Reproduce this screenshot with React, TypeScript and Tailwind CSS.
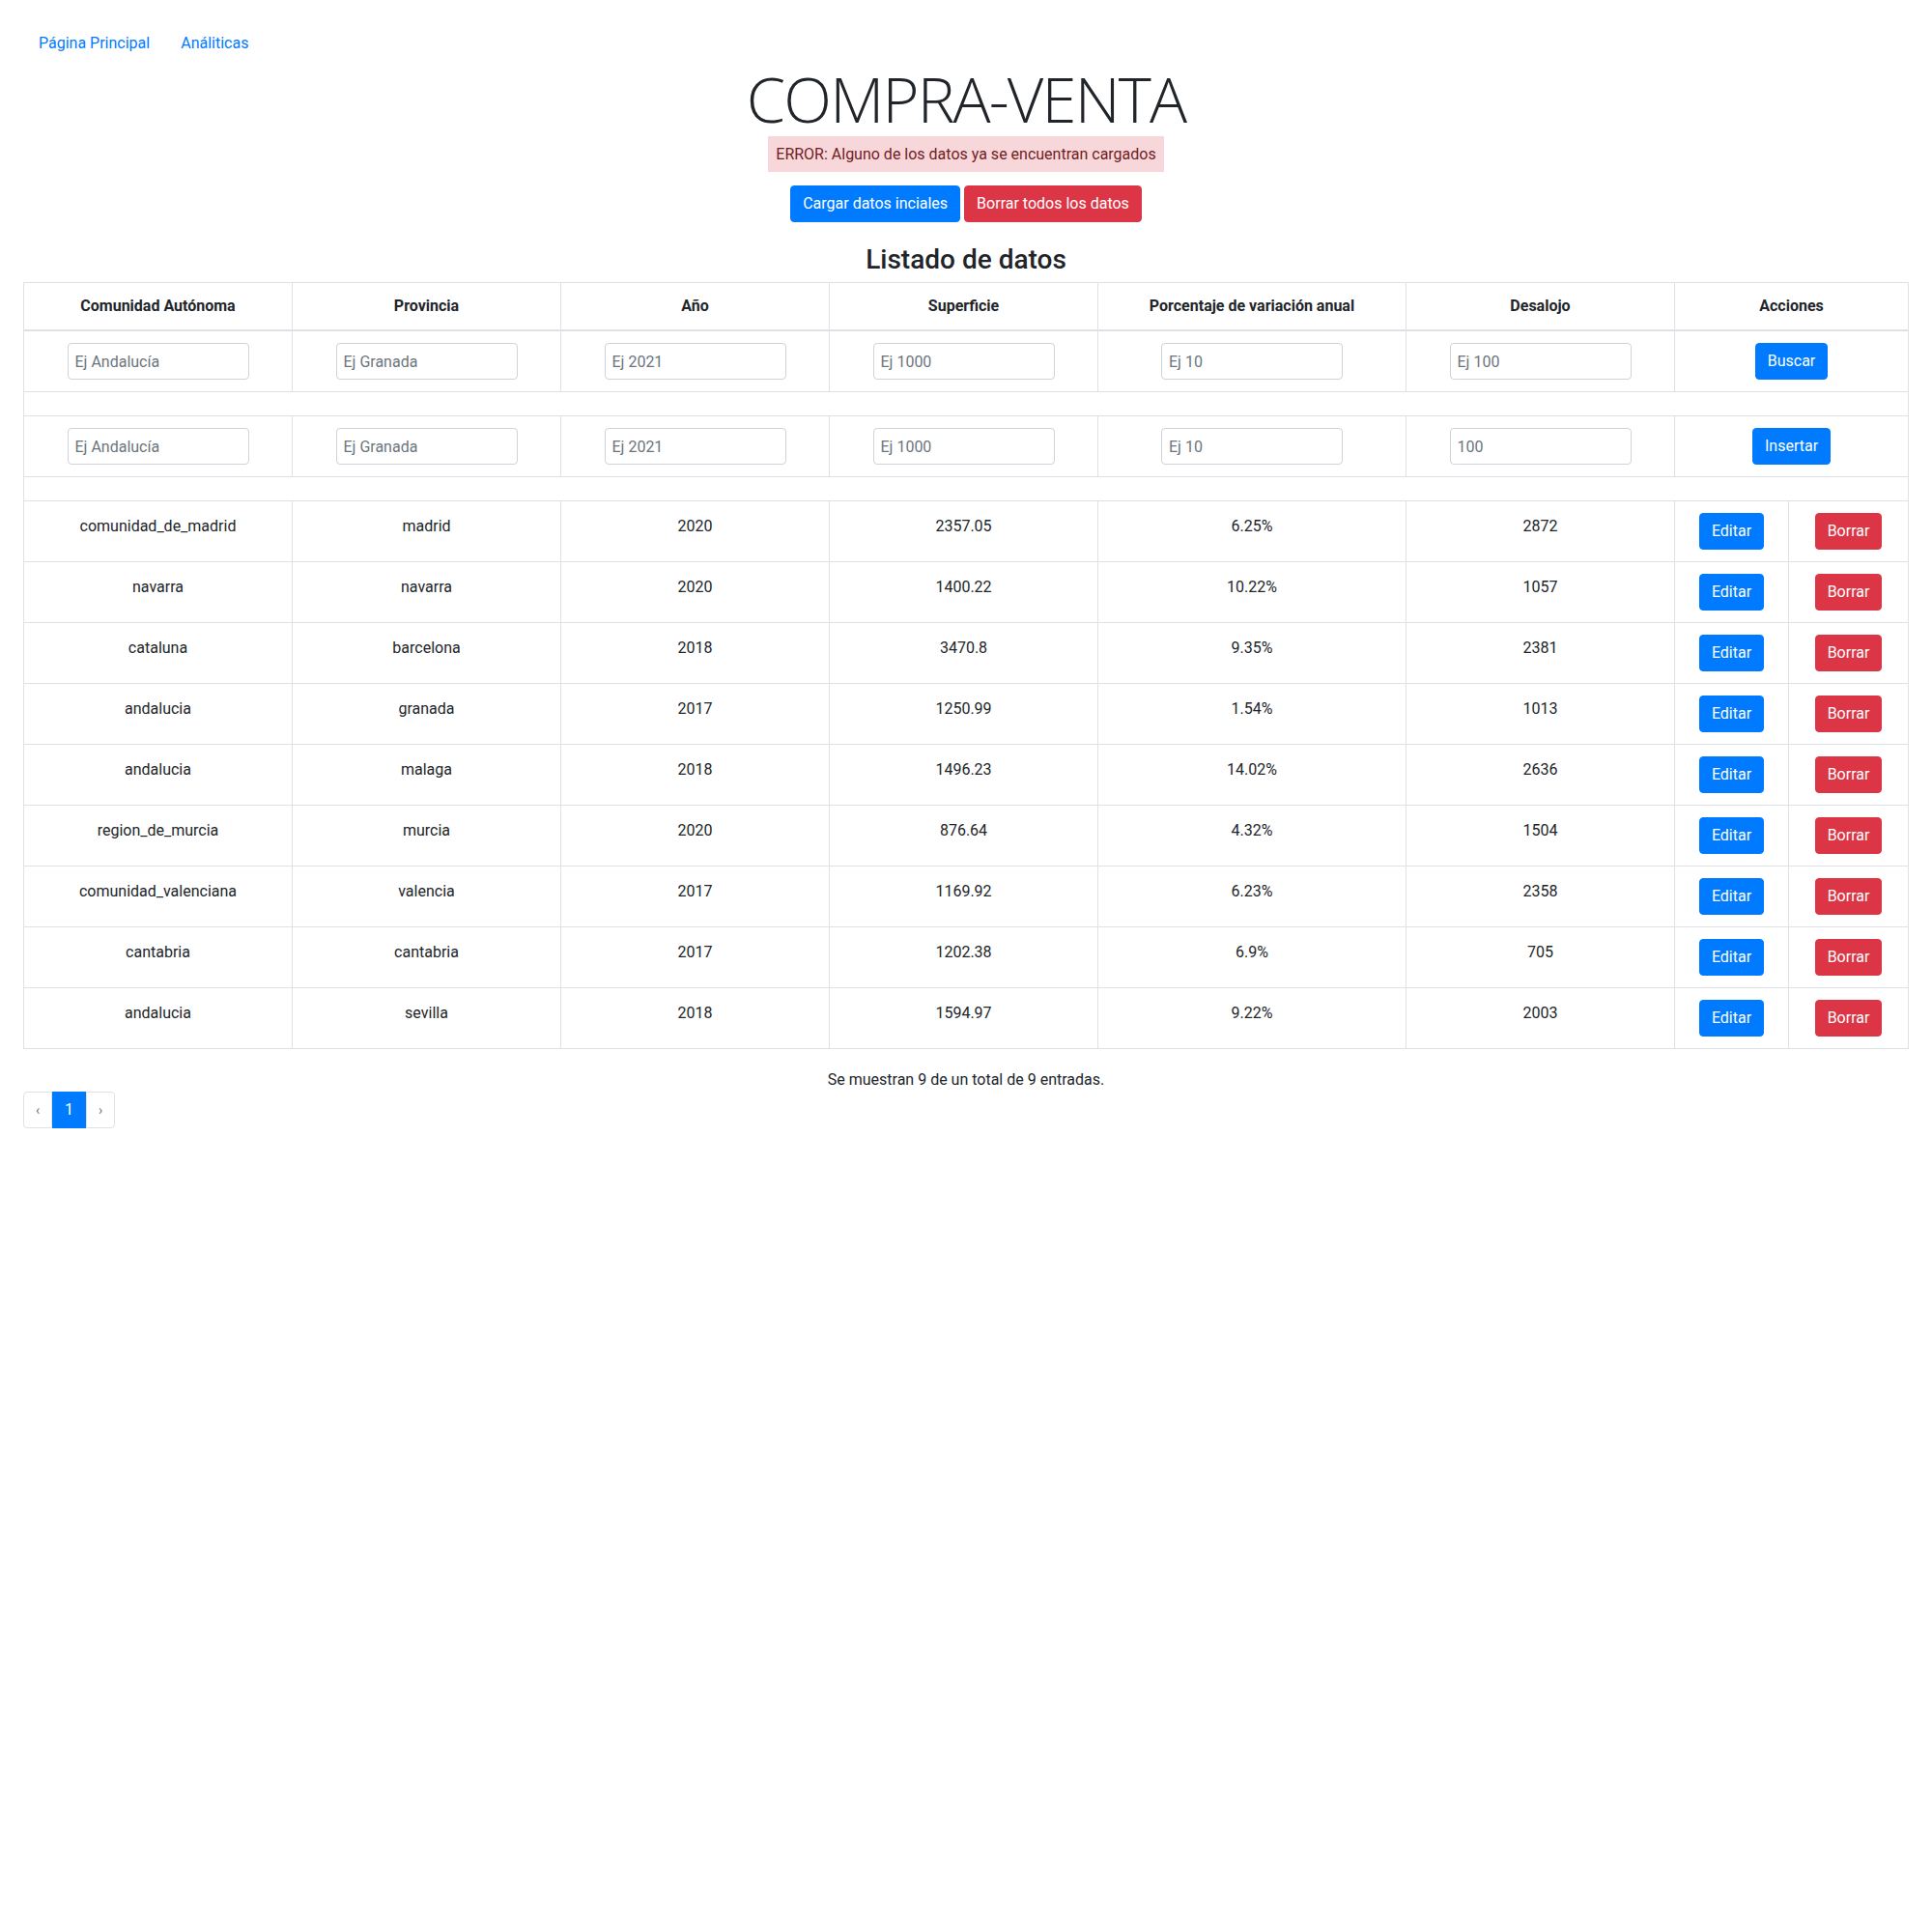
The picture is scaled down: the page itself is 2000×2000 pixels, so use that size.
import React from 'react';

type Row = {
  comunidad: string;
  provincia: string;
  anio: number;
  superficie: string;
  porcentaje: string;
  desalojo: number;
};

const ROWS: Row[] = [
  { comunidad: 'comunidad_de_madrid', provincia: 'madrid', anio: 2020, superficie: '2357.05', porcentaje: '6.25%', desalojo: 2872 },
  { comunidad: 'navarra', provincia: 'navarra', anio: 2020, superficie: '1400.22', porcentaje: '10.22%', desalojo: 1057 },
  { comunidad: 'cataluna', provincia: 'barcelona', anio: 2018, superficie: '3470.8', porcentaje: '9.35%', desalojo: 2381 },
  { comunidad: 'andalucia', provincia: 'granada', anio: 2017, superficie: '1250.99', porcentaje: '1.54%', desalojo: 1013 },
  { comunidad: 'andalucia', provincia: 'malaga', anio: 2018, superficie: '1496.23', porcentaje: '14.02%', desalojo: 2636 },
  { comunidad: 'region_de_murcia', provincia: 'murcia', anio: 2020, superficie: '876.64', porcentaje: '4.32%', desalojo: 1504 },
  { comunidad: 'comunidad_valenciana', provincia: 'valencia', anio: 2017, superficie: '1169.92', porcentaje: '6.23%', desalojo: 2358 },
  { comunidad: 'cantabria', provincia: 'cantabria', anio: 2017, superficie: '1202.38', porcentaje: '6.9%', desalojo: 705 },
  { comunidad: 'andalucia', provincia: 'sevilla', anio: 2018, superficie: '1594.97', porcentaje: '9.22%', desalojo: 2003 },
];

const HEADERS = ['Comunidad Autónoma', 'Provincia', 'Año', 'Superficie', 'Porcentaje de variación anual', 'Desalojo'];

const cell = 'border border-[#dee2e6] p-3 text-center align-top';
// text cells sit a touch lower than the button cells
const textCell = 'border border-[#dee2e6] px-3 pt-[14px] pb-[10px] text-center align-top';
const inputCls =
  'h-[38px] w-[188px] rounded border border-[#ced4da] bg-white px-[7px] text-base text-[#495057] placeholder:text-[#6c757d] outline-none';
const btnBlue = 'inline-block h-[38px] rounded border border-[#007bff] bg-[#007bff] px-3 text-base leading-6 text-white';
const btnRed = 'inline-block h-[38px] rounded border border-[#dc3545] bg-[#dc3545] px-3 text-base leading-6 text-white';

function InputRow({ placeholders, action }: { placeholders: string[]; action: string }) {
  return (
    <tr>
      {placeholders.map((ph, i) => (
        <td key={i} className={cell}>
          <input className={inputCls} placeholder={ph} />
        </td>
      ))}
      <td colSpan={2} className={cell}>
        <button className={btnBlue}>{action}</button>
      </td>
    </tr>
  );
}

function SpacerRow() {
  return (
    <tr>
      <td colSpan={8} className="h-[25px] border border-[#dee2e6] p-0" />
    </tr>
  );
}

export default function App() {
  return (
    <div className="min-h-screen bg-white font-['Roboto',sans-serif] text-base leading-6 text-[#212529]">
      <div className="px-6 pt-[25px]">
        <nav className="flex">
          <a className="px-4 py-2 text-[#007bff]">Página Principal</a>
          <a className="px-4 py-2 text-[#007bff]">Análiticas</a>
        </nav>

        <div className="text-center">
          <h1 className="-mt-px font-['Open_Sans',sans-serif] text-[65px] font-light leading-[77px] tracking-[-1.8px]">
            COMPRA-VENTA
          </h1>
          <div className="inline-block bg-[#f8d7da] px-2 py-[6.5px] text-[#721c24]">
            ERROR: Alguno de los datos ya se encuentran cargados
          </div>
          <div className="mt-[14px] flex justify-center gap-1">
            <button className={btnBlue}>Cargar datos inciales</button>
            <button className={btnRed}>Borrar todos los datos</button>
          </div>
          <h2 className="mt-[22px] mb-[6px] text-[28px] font-medium leading-[34px]">Listado de datos</h2>
        </div>

        <table className="w-[1951px] table-fixed border-collapse">
          <colgroup>
            <col className="w-[278px]" />
            <col className="w-[278px]" />
            <col className="w-[278px]" />
            <col className="w-[278px]" />
            <col className="w-[319px]" />
            <col className="w-[278px]" />
            <col className="w-[118px]" />
            <col className="w-[124px]" />
          </colgroup>
          <thead>
            <tr>
              {HEADERS.map((h) => (
                <th key={h} className="border border-b-2 border-[#dee2e6] p-3 text-center font-bold">
                  {h}
                </th>
              ))}
              <th colSpan={2} className="border border-b-2 border-[#dee2e6] p-3 text-center font-bold">
                Acciones
              </th>
            </tr>
          </thead>
          <tbody>
            <InputRow placeholders={['Ej Andalucía', 'Ej Granada', 'Ej 2021', 'Ej 1000', 'Ej 10', 'Ej 100']} action="Buscar" />
            <SpacerRow />
            <InputRow placeholders={['Ej Andalucía', 'Ej Granada', 'Ej 2021', 'Ej 1000', 'Ej 10', '100']} action="Insertar" />
            <SpacerRow />
            {ROWS.map((r, i) => (
              <tr key={i}>
                <td className={textCell}>{r.comunidad}</td>
                <td className={textCell}>{r.provincia}</td>
                <td className={textCell}>{r.anio}</td>
                <td className={textCell}>{r.superficie}</td>
                <td className={textCell}>{r.porcentaje}</td>
                <td className={textCell}>{r.desalojo}</td>
                <td className={cell}>
                  <button className={btnBlue}>Editar</button>
                </td>
                <td className={cell}>
                  <button className={btnRed}>Borrar</button>
                </td>
              </tr>
            ))}
          </tbody>
        </table>

        <p className="mt-5 text-center">Se muestran 9 de un total de 9 entradas.</p>

        <ul className="flex">
          <li className="flex h-[38px] w-[30px] items-center justify-center rounded-l border border-[#dee2e6] text-sm text-[#6c757d]">‹</li>
          <li className="flex h-[38px] w-[35px] items-center justify-center border border-[#007bff] bg-[#007bff] text-white">1</li>
          <li className="flex h-[38px] w-[30px] items-center justify-center rounded-r border border-[#dee2e6] text-sm text-[#6c757d]">›</li>
        </ul>
      </div>
    </div>
  );
}
